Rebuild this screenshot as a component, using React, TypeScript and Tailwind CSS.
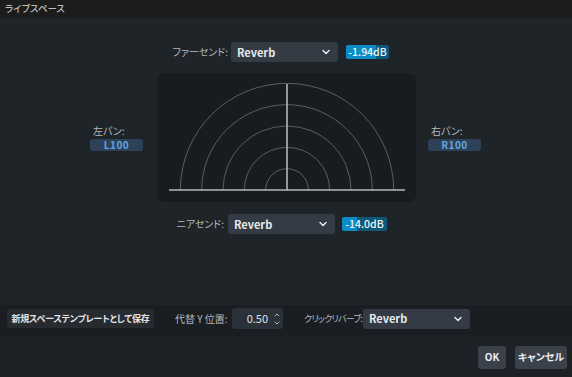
import { ChevronDown, ChevronUp } from 'lucide-react';

const font = "[font-family:'Noto_Sans_CJK_JP','Noto_Sans',sans-serif] [font-feature-settings:'palt']";

function SendSelect({ value }: { value: string }) {
  return (
    <div className="flex h-[20px] w-[107px] items-center justify-between rounded-[3px] bg-[#343b45] pl-[6px] pr-[6px]">
      <span className="text-[11px] font-bold leading-none text-[#e6e8eb]">{value}</span>
      <ChevronDown size={12} strokeWidth={3} className="text-[#e6e8eb]" />
    </div>
  );
}

function DbMeter({ label, fill, width }: { label: string; fill: number; width: string }) {
  return (
    <div className={`relative h-[14px] ${width} overflow-hidden rounded-[2px] bg-[#0d5878]`}>
      <div className="absolute inset-y-0 left-0 bg-[#0a8cc6]" style={{ width: `${fill}%` }} />
      <span className="relative flex h-full items-center justify-center text-[10.5px] font-medium leading-none text-[#eef6fb]">
        {label}
      </span>
    </div>
  );
}

function PanBlock({ label, value }: { label: string; value: string }) {
  return (
    <div className="flex w-[53px] flex-col gap-[3px]">
      <span className="pl-[3px] text-[10px] leading-[11px] text-[#b4b9bf]">{label}</span>
      <div className="flex h-[12px] items-center justify-center rounded-[3px] bg-[#2d4259] text-[10px] font-bold leading-none tracking-[0.5px] text-[#62a6de]">
        {value}
      </div>
    </div>
  );
}

function PanField() {
  const cx = 130;
  const cy = 117;
  const radii = [21.33, 42.67, 64, 85.33, 106.67];
  return (
    <div className="h-[129px] w-[259px] rounded-[8px] bg-[#181b1f]">
      <svg width="259" height="129" viewBox="0 0 259 129">
        {radii.map((r) => (
          <path
            key={r}
            d={`M ${cx - r} ${cy} A ${r} ${r} 0 0 1 ${cx + r} ${cy}`}
            fill="none"
            stroke="#5a5f66"
            strokeWidth="1"
          />
        ))}
        <line x1="12" y1={cy} x2="248" y2={cy} stroke="#b4b7ba" strokeWidth="1.6" />
        <line x1={cx} y1="11" x2={cx} y2={cy} stroke="#b4b7ba" strokeWidth="1.6" />
      </svg>
    </div>
  );
}

export default function App() {
  return (
    <div className={`flex h-[377px] w-[572px] flex-col overflow-hidden bg-[#1f2429] ${font}`}>
      <div className="flex h-[18px] items-center bg-[#1c1c1c] pl-[5px]">
        <span className="text-[9.5px] leading-none text-[#dcdcdc]">ライブスペース</span>
      </div>

      <div className="flex flex-1 flex-col pt-[24px]">
        <div className="flex items-center">
          <span className="w-[231px] whitespace-nowrap pr-[3px] text-right text-[10px] leading-none text-[#b4b9bf]">ファーセンド:</span>
          <SendSelect value="Reverb" />
          <div className="ml-[8px]">
            <DbMeter label="-1.94dB" fill={70} width="w-[43px]" />
          </div>
        </div>

        <div className="mt-[11px] flex items-center">
          <div className="ml-[90px]">
            <PanBlock label="左パン:" value="L100" />
          </div>
          <div className="ml-[14px]">
            <PanField />
          </div>
          <div className="ml-[12px]">
            <PanBlock label="右パン:" value="R100" />
          </div>
        </div>

        <div className="mt-[12px] flex items-center">
          <span className="w-[228px] whitespace-nowrap pr-[4px] text-right text-[10px] leading-none text-[#b4b9bf]">ニアセンド:</span>
          <SendSelect value="Reverb" />
          <div className="ml-[7px]">
            <DbMeter label="-14.0dB" fill={33} width="w-[45px]" />
          </div>
        </div>
      </div>

      <div className="flex h-[32px] items-start bg-[#1a1d21] pl-[7px] pt-[3px]">
        <div className="mt-[1px] flex h-[19px] w-[147px] items-center justify-center whitespace-nowrap rounded-[3px] bg-[#272b30] text-[9px] font-bold leading-none tracking-[-0.2px] text-[#e3e5e8]">
          新規スペーステンプレートとして保存
        </div>
        <div className="ml-[21px] flex h-[21px] items-center">
          <span className="w-[57px] whitespace-nowrap text-[10px] leading-none text-[#b4b9bf]">代替 Y 位置:</span>
          <div className="flex h-[21px] w-[51px] items-center justify-end rounded-[3px] bg-[#2b3139] pr-[2px]">
            <span className="text-[11px] leading-none text-[#dfe2e6]">0.50</span>
            <div className="ml-[5px] flex flex-col text-[#aeb4bb]">
              <ChevronUp size={8} strokeWidth={3} />
              <ChevronDown size={8} strokeWidth={3} />
            </div>
          </div>
        </div>
        <div className="ml-[21px] flex h-[21px] items-center gap-[3px]">
          <span className="w-[56px] whitespace-nowrap text-[9px] leading-none tracking-[-0.8px] text-[#b4b9bf]">クリックリバーブ:</span>
          <SendSelect value="Reverb" />
        </div>
      </div>

      <div className="flex h-[40px] items-center justify-end gap-[9px] bg-[#1d2024] pr-[5px]">
        <div className="flex h-[23px] w-[28px] items-center justify-center rounded-[3px] bg-[#3a414b] text-[10px] font-bold leading-none text-[#eceef0]">
          OK
        </div>
        <div className="flex h-[23px] w-[52px] items-center justify-center whitespace-nowrap rounded-[3px] bg-[#3a414b] text-[10px] font-bold leading-none text-[#eceef0]">
          キャンセル
        </div>
      </div>
    </div>
  );
}
